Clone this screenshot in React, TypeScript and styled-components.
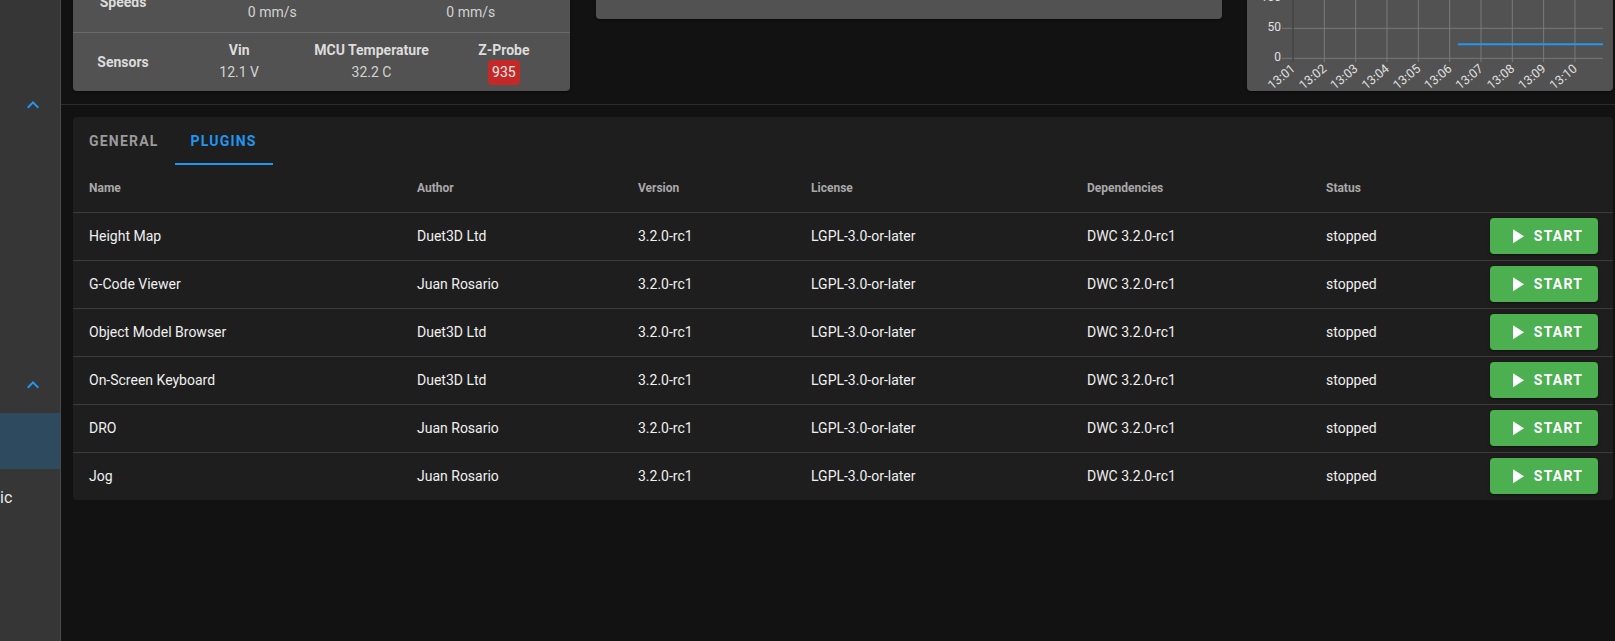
import React from "react";
import styled, { createGlobalStyle } from "styled-components";

const GlobalStyle = createGlobalStyle`
  html, body {
    margin: 0;
    height: 100%;
    background: #121212;
  }
  body {
    font-family: Roboto, "Liberation Sans", sans-serif;
    overflow: hidden;
    -webkit-font-smoothing: antialiased;
  }
  #root {
    height: 100%;
  }
`;

const Shell = styled.div`
  display: flex;
  height: 100vh;
  background: #121212;
`;

const Sidebar = styled.nav`
  width: 60px;
  flex-shrink: 0;
  background: #363636;
  border-right: 1px solid #4a4a4a;
  padding-top: 77px;
  overflow: hidden;
  display: flex;
  flex-direction: column;
`;

const GroupHeader = styled.div`
  height: 56px;
  display: flex;
  align-items: center;
  justify-content: flex-end;
  padding-right: 15px;
  flex-shrink: 0;
`;

const NavItem = styled.div<{ $active?: boolean }>`
  height: 56px;
  flex-shrink: 0;
  display: flex;
  align-items: center;
  background: ${(p) => (p.$active ? "#2e4a5f" : "transparent")};
  color: #e8e8e8;
  font-size: 16px;
  white-space: nowrap;
`;

const Main = styled.main`
  flex: 1;
  min-width: 0;
  padding: 0 2px 0 12px;
  overflow: hidden;
`;

// the page is scrolled: the top of the status panels sits above the window
const TopRow = styled.div`
  display: flex;
  align-items: flex-start;
  margin-top: -120px;
`;

const Panel = styled.div<{ $width: number; $height: number; $gap?: number }>`
  width: ${(p) => p.$width}px;
  height: ${(p) => p.$height}px;
  margin-left: ${(p) => p.$gap ?? 0}px;
  flex-shrink: 0;
  background: #525252;
  border-radius: 4px;
  box-shadow: 0 2px 1px -1px rgba(0, 0, 0, 0.2), 0 1px 1px 0 rgba(0, 0, 0, 0.14),
    0 1px 3px 0 rgba(0, 0, 0, 0.12);
  overflow: hidden;
  display: flex;
  flex-direction: column;
  justify-content: flex-end;
`;

const StatusRow = styled.div<{ $pt: number; $pb: number; $divider?: boolean }>`
  display: flex;
  align-items: center;
  padding: ${(p) => p.$pt}px 0 ${(p) => p.$pb}px;
  border-bottom: ${(p) => (p.$divider ? "1px solid #686868" : "none")};
`;

const RowLabel = styled.div`
  width: 100px;
  flex-shrink: 0;
  text-align: center;
  font-size: 14px;
  font-weight: 700;
  color: #dcdcdc;
`;

const StatusCell = styled.div`
  flex: 1;
  display: flex;
  flex-direction: column;
  align-items: center;
`;

const CellTitle = styled.div`
  font-size: 14px;
  font-weight: 700;
  line-height: 20px;
  color: #dcdcdc;
`;

const CellValue = styled.div`
  font-size: 14px;
  line-height: 24px;
  height: 24px;
  color: #d2d2d2;
`;

const Badge = styled.span`
  display: inline-block;
  height: 25px;
  line-height: 25px;
  padding: 0 4px;
  border-radius: 4px;
  background: #c62828;
  color: #eeeeee;
`;

const Divider = styled.div`
  height: 1px;
  background: #2c2c2c;
  margin: 13px -2px 0 -12px;
`;

const Card = styled.section`
  margin-top: 12px;
  background: #1e1e1e;
  border-radius: 4px;
  overflow: hidden;
`;

const Tabs = styled.div`
  display: flex;
  height: 48px;
`;

const Tab = styled.div<{ $active?: boolean }>`
  position: relative;
  display: flex;
  align-items: center;
  padding: 0 16px;
  font-size: 14px;
  font-weight: 700;
  letter-spacing: 1.2px;
  text-transform: uppercase;
  color: ${(p) => (p.$active ? "#2196f3" : "#9a9a9a")};

  &::after {
    content: "";
    display: ${(p) => (p.$active ? "block" : "none")};
    position: absolute;
    left: 0;
    right: 0;
    bottom: 0;
    height: 2px;
    background: #2196f3;
  }
`;

const Table = styled.table`
  width: 100%;
  border-collapse: collapse;
  table-layout: fixed;
`;

const Th = styled.th<{ $w: number }>`
  width: ${(p) => p.$w}px;
  height: 47px;
  padding: 0 16px;
  text-align: left;
  font-size: 12px;
  font-weight: 700;
  color: #a9a9a9;
  border-bottom: 1px solid #3b3b3b;
  box-sizing: border-box;
`;

const Tr = styled.tr`
  &:not(:last-child) td {
    border-bottom: 1px solid #3b3b3b;
  }
`;

const Td = styled.td<{ $right?: boolean }>`
  height: 47px;
  padding: 0 ${(p) => (p.$right ? 15 : 16)}px 0 16px;
  text-align: ${(p) => (p.$right ? "right" : "left")};
  font-size: 14px;
  color: #f0f0f0;
  white-space: nowrap;
`;

const StartButton = styled.button`
  display: inline-flex;
  align-items: center;
  justify-content: center;
  gap: 5px;
  width: 108px;
  height: 36px;
  padding: 0;
  border: none;
  border-radius: 4px;
  background: #4caf50;
  color: #ffffff;
  font-family: Roboto, "Liberation Sans", sans-serif;
  font-size: 14px;
  font-weight: 700;
  letter-spacing: 1.25px;
  vertical-align: middle;
  box-shadow: 0 3px 1px -2px rgba(0, 0, 0, 0.2), 0 2px 2px 0 rgba(0, 0, 0, 0.14),
    0 1px 5px 0 rgba(0, 0, 0, 0.12);
`;

const ChevronUp = () => (
  <svg width="24" height="24" viewBox="0 0 24 24">
    <path d="M7.41,15.41L12,10.83L16.59,15.41L18,14L12,8L6,14L7.41,15.41Z" fill="#2196f3" />
  </svg>
);

const PlayIcon = () => (
  <svg width="24" height="24" viewBox="0 0 24 24">
    <path d="M8,5.14V19.14L19,12.14L8,5.14Z" fill="#ffffff" />
  </svg>
);

const TICKS = ["13:01", "13:02", "13:03", "13:04", "13:05", "13:06", "13:07", "13:08", "13:09", "13:10"];

// y in svg = page y + 120 (panel top is scrolled out of view)
const TempChart = () => {
  const yFor = (v: number) => 178.3 - v * 0.6;
  const xFor = (i: number) => 46 + i * 31.33;
  return (
    <svg width="366" height="211" viewBox="0 0 366 211">
      {[0, 50, 100, 150].map((v) => (
        <line key={v} x1={35} x2={356} y1={yFor(v)} y2={yFor(v)} stroke="#7a7a7a" strokeWidth={1} />
      ))}
      {TICKS.map((_, i) =>
        i === 0 ? null : (
          <line key={i} x1={xFor(i)} x2={xFor(i)} y1={0} y2={182} stroke="#7a7a7a" strokeWidth={1} />
        )
      )}
      <line x1={46} x2={46} y1={0} y2={182} stroke="#444444" strokeWidth={1.5} />
      {[0, 50, 100].map((v) => (
        <text
          key={v}
          x={34}
          y={yFor(v)}
          textAnchor="end"
          dominantBaseline="middle"
          fontSize="12"
          fill="#e0e0e0"
          fontFamily="Roboto, sans-serif"
        >
          {v}
        </text>
      ))}
      <line x1={211} x2={356} y1={164.3} y2={164.3} stroke="#2196f3" strokeWidth={2} />
      {TICKS.map((t, i) => (
        <text
          key={t}
          transform={`translate(${xFor(i) + 3}, 190) rotate(-40)`}
          textAnchor="end"
          fontSize="12.5"
          fill="#e0e0e0"
          fontFamily="Roboto, sans-serif"
        >
          {t}
        </text>
      ))}
    </svg>
  );
};

const plugins = [
  { name: "Height Map", author: "Duet3D Ltd" },
  { name: "G-Code Viewer", author: "Juan Rosario" },
  { name: "Object Model Browser", author: "Duet3D Ltd" },
  { name: "On-Screen Keyboard", author: "Duet3D Ltd" },
  { name: "DRO", author: "Juan Rosario" },
  { name: "Jog", author: "Juan Rosario" },
];

const columns = [
  { label: "Name", w: 328 },
  { label: "Author", w: 221 },
  { label: "Version", w: 173 },
  { label: "License", w: 276 },
  { label: "Dependencies", w: 239 },
  { label: "Status", w: 164 },
  { label: "", w: 139 },
];

export default function App() {
  return (
    <>
      <GlobalStyle />
      <Shell>
        <Sidebar>
          <GroupHeader>
            <ChevronUp />
          </GroupHeader>
          <NavItem />
          <NavItem />
          <NavItem />
          <NavItem />
          <GroupHeader>
            <ChevronUp />
          </GroupHeader>
          <NavItem $active />
          <NavItem>ic</NavItem>
          <NavItem />
        </Sidebar>

        <Main>
          <TopRow>
            <Panel $width={497} $height={211}>
              <StatusRow $pt={10} $pb={8} $divider>
                <RowLabel>Speeds</RowLabel>
                <StatusCell>
                  <CellTitle>Requested Speed</CellTitle>
                  <CellValue>0 mm/s</CellValue>
                </StatusCell>
                <StatusCell>
                  <CellTitle>Top Speed</CellTitle>
                  <CellValue>0 mm/s</CellValue>
                </StatusCell>
              </StatusRow>
              <StatusRow $pt={7} $pb={7}>
                <RowLabel>Sensors</RowLabel>
                <StatusCell>
                  <CellTitle>Vin</CellTitle>
                  <CellValue>12.1 V</CellValue>
                </StatusCell>
                <StatusCell>
                  <CellTitle>MCU Temperature</CellTitle>
                  <CellValue>32.2 C</CellValue>
                </StatusCell>
                <StatusCell>
                  <CellTitle>Z-Probe</CellTitle>
                  <CellValue>
                    <Badge>935</Badge>
                  </CellValue>
                </StatusCell>
              </StatusRow>
            </Panel>
            <Panel $width={626} $height={139} $gap={26} />
            <Panel $width={366} $height={211} $gap={25}>
              <TempChart />
            </Panel>
          </TopRow>

          <Divider />

          <Card>
            <Tabs>
              <Tab>General</Tab>
              <Tab $active>Plugins</Tab>
            </Tabs>
            <Table>
              <thead>
                <tr>
                  {columns.map((c, i) => (
                    <Th key={i} $w={c.w}>
                      {c.label}
                    </Th>
                  ))}
                </tr>
              </thead>
              <tbody>
                {plugins.map((p) => (
                  <Tr key={p.name}>
                    <Td>{p.name}</Td>
                    <Td>{p.author}</Td>
                    <Td>3.2.0-rc1</Td>
                    <Td>LGPL-3.0-or-later</Td>
                    <Td>DWC 3.2.0-rc1</Td>
                    <Td>stopped</Td>
                    <Td $right>
                      <StartButton>
                        <PlayIcon />
                        START
                      </StartButton>
                    </Td>
                  </Tr>
                ))}
              </tbody>
            </Table>
          </Card>
        </Main>
      </Shell>
    </>
  );
}
